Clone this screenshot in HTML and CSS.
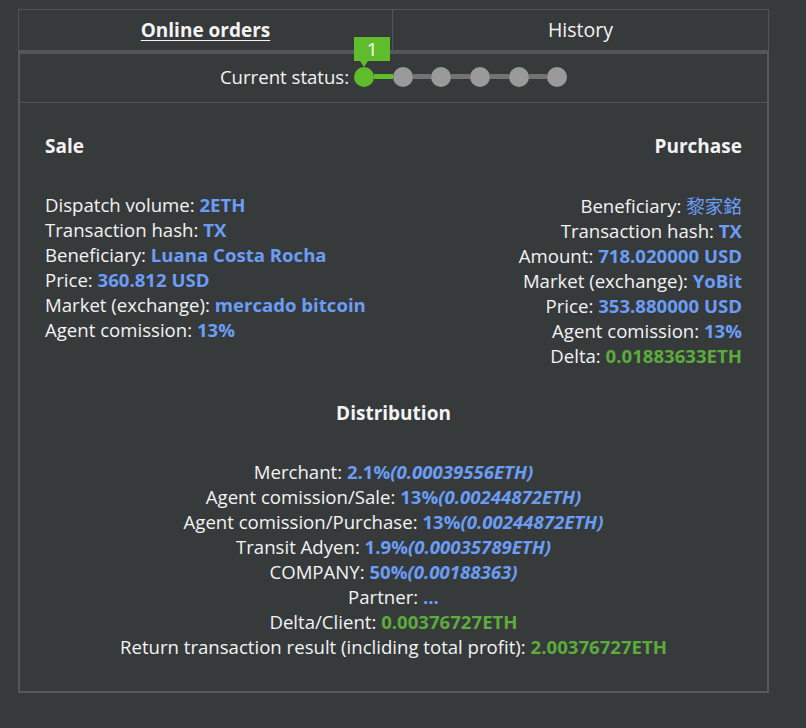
FILE: index.html
```html
<!DOCTYPE html>
<html lang="en">
<head>
<meta charset="utf-8">
<title>Orders</title>
<link rel="stylesheet" href="styles.css">
</head>
<body>
<div class="widget">
  <div class="tabs">
    <div class="tab active"><span>Online orders</span></div>
    <div class="tab">History</div>
  </div>
  <div class="panel">
    <div class="status">
      <span class="status-label">Current status:</span>
      <div class="steps">
        <div class="dot done">
          <div class="badge">1</div>
          <div class="pointer"></div>
        </div>
        <div class="bar done"></div>
        <div class="dot"></div>
        <div class="bar"></div>
        <div class="dot"></div>
        <div class="bar"></div>
        <div class="dot"></div>
        <div class="bar"></div>
        <div class="dot"></div>
        <div class="bar"></div>
        <div class="dot"></div>
      </div>
    </div>
    <div class="body">
      <div class="columns">
        <div class="col">
          <h2 class="heading">Sale</h2>
          <ul class="list">
            <li>Dispatch volume: <b class="blue">2ETH</b></li>
            <li>Transaction hash: <b class="blue">TX</b></li>
            <li>Beneficiary: <b class="blue">Luana Costa Rocha</b></li>
            <li>Price: <b class="blue">360.812 USD</b></li>
            <li>Market (exchange): <b class="blue">mercado bitcoin</b></li>
            <li>Agent comission: <b class="blue">13%</b></li>
          </ul>
        </div>
        <div class="col right">
          <h2 class="heading">Purchase</h2>
          <ul class="list">
            <li>Beneficiary: <b class="blue cjk">黎家銘</b></li>
            <li>Transaction hash: <b class="blue">TX</b></li>
            <li>Amount: <b class="blue">718.020000 USD</b></li>
            <li>Market (exchange): <b class="blue">YoBit</b></li>
            <li>Price: <b class="blue">353.880000 USD</b></li>
            <li>Agent comission: <b class="blue">13%</b></li>
            <li>Delta: <b class="green">0.01883633ETH</b></li>
          </ul>
        </div>
      </div>
      <div class="distribution">
        <h2 class="heading">Distribution</h2>
        <ul class="list">
          <li>Merchant: <b class="blue">2.1%<i>(0.00039556ETH)</i></b></li>
          <li>Agent comission/Sale: <b class="blue">13%<i>(0.00244872ETH)</i></b></li>
          <li>Agent comission/Purchase: <b class="blue">13%<i>(0.00244872ETH)</i></b></li>
          <li>Transit Adyen: <b class="blue">1.9%<i>(0.00035789ETH)</i></b></li>
          <li>COMPANY: <b class="blue">50%<i>(0.00188363)</i></b></li>
          <li>Partner: <b class="blue">...</b></li>
          <li>Delta/Client: <b class="green">0.00376727ETH</b></li>
          <li>Return transaction result (incliding total profit): <b class="green">2.00376727ETH</b></li>
        </ul>
      </div>
    </div>
  </div>
</div>
</body>
</html>
```
FILE: styles.css
```css
* { box-sizing: border-box; }
html, body {
  margin: 0;
  padding: 0;
  background: #363a3b;
}
body {
  font-family: "Open Sans", "Noto Sans", "Noto Sans CJK TC", sans-serif;
  font-size: 18.6px;
  color: #f3f3f3;
}
.widget {
  margin: 9px 0 0 18px;
  width: 751px;
}
.tabs {
  display: grid;
  grid-template-columns: 374px 1fr;
  border: 1px solid #505455;
  border-bottom: none;
  height: 41px;
}
.tab {
  text-align: center;
  line-height: 40px;
  font-size: 19.5px;
  color: #f3f3f3;
}
.tab:first-child { border-right: 1px solid #505455; }
.tab.active span {
  font-weight: 700;
  font-size: 19px;
  text-decoration: underline;
  text-underline-offset: 3px;
}
.panel {
  border: 2px solid #56595a;
  border-top: 4px solid #545758;
}
.status {
  display: flex;
  justify-content: center;
  align-items: center;
  height: 49px;
  padding-bottom: 3px;
  border-bottom: 1px solid #505455;
}
.status-label { margin-right: 5px; }
.steps {
  display: flex;
  align-items: center;
}
.dot {
  width: 20px;
  height: 20px;
  border-radius: 50%;
  background: #9a9a9a;
  position: relative;
}
.dot.done { background: #5fbd2b; }
.bar {
  width: 18.6px;
  height: 5px;
  background: #737373;
}
.bar.done { background: #5fbd2b; }
.badge {
  position: absolute;
  left: 0;
  top: -30px;
  width: 36px;
  height: 24px;
  background: #5fbd2b;
  color: #fff;
  font-size: 19px;
  line-height: 24px;
  text-align: center;
}
.pointer {
  position: absolute;
  left: 6px;
  top: -6px;
  width: 0;
  height: 0;
  border-left: 4px solid transparent;
  border-right: 4px solid transparent;
  border-top: 6px solid #5fbd2b;
}
.body {
  padding: 31px 25px 32px;
}
.columns {
  display: grid;
  grid-template-columns: 1fr 1fr;
}
.col.right { text-align: right; }
.heading {
  margin: 0 0 33px;
  font-size: 19px;
  font-weight: 700;
  line-height: 25px;
}
.list {
  list-style: none;
  margin: 0;
  padding: 0;
}
.list li { line-height: 25px; white-space: nowrap; }
.blue { color: #6b9df5; font-weight: 700; }
.green { color: #5cab3c; font-weight: 700; }
.blue i { font-style: italic; }
.cjk { font-family: "Noto Sans CJK TC", sans-serif; font-weight: 400; }
.distribution {
  text-align: center;
  margin-top: 33px;
}
```
